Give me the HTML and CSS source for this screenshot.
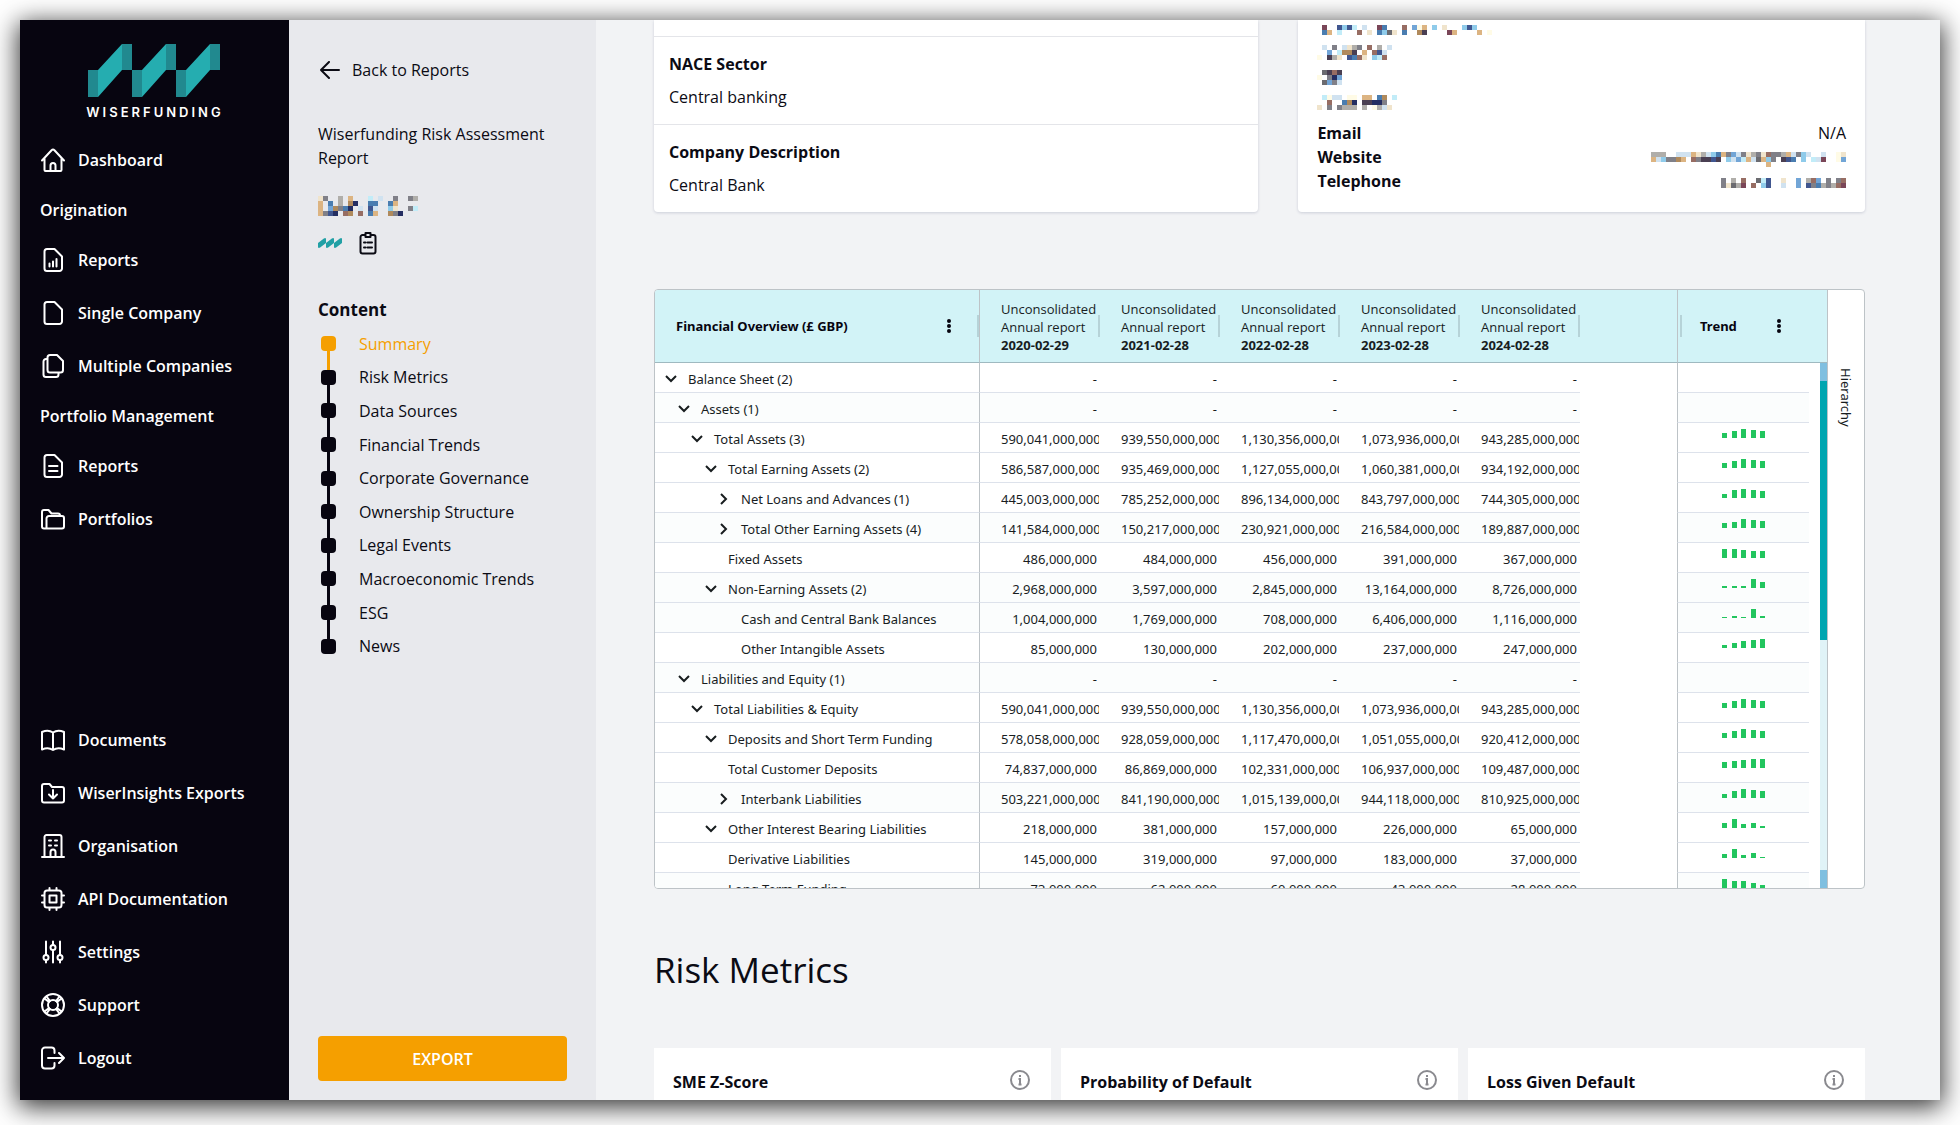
FILE: index.html
```
<!DOCTYPE html>
<html lang="en">
<head>
    <meta charset="UTF-8">
    <meta name="viewport" content="width=device-width, initial-scale=1.0">
    <title>Wiserfunding Risk Assessment Report</title>
    <link rel="stylesheet" href="styles.css">
</head>
<body>
    <div class="app">
        <!-- Main navigation -->
        <nav class="sidebar">
            <a class="logo" href="#">
                <svg viewBox="0 0 132 53" width="132" height="53" aria-hidden="true">
                    <g fill="#21898f">
                        <path d="M0 26h10v27H0zM34 0h10v26H34zM44 26h10v27H44zM78 0h10v26H78zM88 26h10v27H88zM122 0h10v26h-10z"/>
                    </g>
                    <g fill="#25adb0">
                        <path d="M10 26L34 0v26L10 53zM54 26L78 0v26L54 53zM98 26L122 0v26L98 53z"/>
                    </g>
                </svg>
                <span class="logo-text">WISERFUNDING</span>
            </a>

            <a class="nav-item" href="#">
                <svg class="icon" viewBox="0 0 24 24"><path d="M1 12.5L10.8 2a1.6 1.6 0 0 1 2.4 0L23 12.5M3.5 10.5V22a1 1 0 0 0 1 1h15a1 1 0 0 0 1-1V10.5M9.5 23v-5.5a2.5 2.5 0 0 1 5 0V23"/></svg>
                Dashboard
            </a>
            <h2 class="nav-title">Origination</h2>
            <a class="nav-item" href="#">
                <svg class="icon" viewBox="0 0 24 24"><path d="M6 1h7.5L21 8.5V20.5A2.5 2.5 0 0 1 18.5 23H6a2.5 2.5 0 0 1-2.5-2.5v-17A2.5 2.5 0 0 1 6 1zM8.5 15.5v3M12 13.5v5M15.5 11v7.5"/></svg>
                Reports
            </a>
            <a class="nav-item" href="#">
                <svg class="icon" viewBox="0 0 24 24"><path d="M6 1h7.5L21 8.5V20.5A2.5 2.5 0 0 1 18.5 23H6a2.5 2.5 0 0 1-2.5-2.5v-17A2.5 2.5 0 0 1 6 1z"/></svg>
                Single Company
            </a>
            <a class="nav-item" href="#">
                <svg class="icon" viewBox="0 0 24 24"><path d="M9 1h7l6 6v9a2.5 2.5 0 0 1-2.5 2.5H9A2.5 2.5 0 0 1 6.5 16V3.5A2.5 2.5 0 0 1 9 1zM6.5 5H5a2.5 2.5 0 0 0-2.5 2.5v13A2.5 2.5 0 0 0 5 23h10a2.5 2.5 0 0 0 2.5-2.5v-2"/></svg>
                Multiple Companies
            </a>
            <h2 class="nav-title">Portfolio Management</h2>
            <a class="nav-item" href="#">
                <svg class="icon" viewBox="0 0 24 24"><path d="M6 1h7.5L21 8.5V20.5A2.5 2.5 0 0 1 18.5 23H6a2.5 2.5 0 0 1-2.5-2.5v-17A2.5 2.5 0 0 1 6 1zM8 12h8.5M8 17h8.5"/></svg>
                Reports
            </a>
            <a class="nav-item" href="#">
                <svg class="icon" viewBox="0 0 24 24"><path d="M5.5 21.5H3a2 2 0 0 1-2-2V5a2 2 0 0 1 2-2h4.5l3 3.5H17a2 2 0 0 1 2 2V9M5.5 21.5v-10A2.5 2.5 0 0 1 8 9h13a2 2 0 0 1 2 2v8.5a2 2 0 0 1-2 2z"/></svg>
                Portfolios
            </a>

            <div class="nav-bottom">
                <a class="nav-item" href="#">
                    <svg class="icon" viewBox="0 0 24 24"><path d="M12 4.500C9 2.500 4.500 2.500 1 4v17.500c3.500-1.500 8-1.500 11 .500 3-2 7.500-2 11-.500V4c-3.500-1.500-8-1.500-11 .500zM12 4.500V22"/></svg>
                    Documents
                </a>
                <a class="nav-item" href="#">
                    <svg class="icon" viewBox="0 0 24 24"><path d="M3 3h5.5L11 6h10a2 2 0 0 1 2 2v11.5a2 2 0 0 1-2 2H3a2 2 0 0 1-2-2V5a2 2 0 0 1 2-2zM12 9v8.5M8 13.5l4 4 4-4"/></svg>
                    WiserInsights Exports
                </a>
                <a class="nav-item" href="#">
                    <svg class="icon" viewBox="0 0 24 24"><path d="M1 23h22M3.5 23V3a2 2 0 0 1 2-2h13a2 2 0 0 1 2 2v20M9.5 23v-5a2.5 2.5 0 0 1 5 0v5M8 6.5h2M14 6.5h2M8 11.5h2M14 11.5h2"/></svg>
                    Organisation
                </a>
                <a class="nav-item" href="#">
                    <svg class="icon" viewBox="0 0 24 24"><path d="M6 3.5h12A2.5 2.5 0 0 1 20.5 6v12a2.5 2.5 0 0 1-2.5 2.5H6A2.5 2.5 0 0 1 3.5 18V6A2.5 2.5 0 0 1 6 3.5zM8.5 8.5h7v7h-7zM8.500 1v2.5M15.5 1v2.5M8.5 20.5V23M15.5 20.5V23M1 8.5h2.5M1 15.5h2.5M20.5 8.5H23M20.5 15.5H23"/></svg>
                    API Documentation
                </a>
                <a class="nav-item" href="#">
                    <svg class="icon" viewBox="0 0 24 24"><path d="M5 1.5V15M5 20v2.5M12 1.5V5M12 10v12.5M19 1.5V15M19 20v2.5"/><circle cx="5" cy="17.5" r="2.5"/><circle cx="12" cy="7.5" r="2.5"/><circle cx="19" cy="17.5" r="2.5"/></svg>
                    Settings
                </a>
                <a class="nav-item" href="#">
                    <svg class="icon" viewBox="0 0 24 24"><circle cx="12" cy="12" r="11"/><circle cx="12" cy="12" r="5"/><path d="M3.5 5.5l4.5 3.5M5.5 3.5L9 8M20.5 5.5L16 9M18.5 3.5L15 8M3.5 18.5L8 15M5.5 20.5L9 16M20.5 18.5L16 15M18.5 20.5L15 16"/></svg>
                    Support
                </a>
                <a class="nav-item" href="#">
                    <svg class="icon" viewBox="0 0 24 24"><path d="M13.5 7V4.5A3 3 0 0 0 10.5 1.5H4A3 3 0 0 0 1 4.5v15a3 3 0 0 0 3 3h6.5a3 3 0 0 0 3-3V17M7 12h16M18 7l5 5-5 5"/></svg>
                    Logout
                </a>
            </div>
        </nav>

        <!-- Report panel -->
        <aside class="panel">
            <a class="back" href="#">
                <svg class="back-icon" viewBox="0 0 20 18" width="20" height="18" aria-hidden="true"><path d="M19 9H1M9 1L1 9l8 8"/></svg>
                Back to Reports
            </a>
            <p class="panel-title">Wiserfunding Risk Assessment Report</p>
            <svg class="redacted" data-rows="yG..u.t...c.p..G..Gu|t.b.u.on..bb..bt|t.soGbn.p.Bp..ly..Gc|tGBn.wo.w.bt..oGn"></svg>
            <div class="panel-icons">
                <svg viewBox="0 0 132 53" width="24" height="10" aria-hidden="true">
                    <path fill="#21a0a5" d="M0 26L34 0h10v26L10 53H0zM44 26L78 0h10v26L54 53H44zM88 26L122 0h10v26L98 53H88z"/>
                </svg>
                <svg class="clipboard" viewBox="0 0 18 24" width="18" height="24" aria-hidden="true"><path d="M5.5 4H3.5A2 2 0 0 0 1.5 6v14.5a2 2 0 0 0 2 2h11a2 2 0 0 0 2-2V6a2 2 0 0 0-2-2h-2M6.5 2h5v4h-5zM5 11.5h1.5M8.5 11.5H13M5 16.5h1.5M8.5 16.5H13"/></svg>
            </div>
            <h2 class="toc-title">Content</h2>
            <ul class="toc">
                <li class="active"><a href="#">Summary</a></li>
                <li><a href="#">Risk Metrics</a></li>
                <li><a href="#">Data Sources</a></li>
                <li><a href="#">Financial Trends</a></li>
                <li><a href="#">Corporate Governance</a></li>
                <li><a href="#">Ownership Structure</a></li>
                <li><a href="#">Legal Events</a></li>
                <li><a href="#">Macroeconomic Trends</a></li>
                <li><a href="#">ESG</a></li>
                <li><a href="#">News</a></li>
            </ul>
            <button class="export" type="button">EXPORT</button>
        </aside>

        <main class="content">
            <div class="company">
                <section class="card details">
                    <div class="detail detail-end"></div>
                    <div class="detail">
                        <h3>NACE Sector</h3>
                        <p>Central banking</p>
                    </div>
                    <div class="detail">
                        <h3>Company Description</h3>
                        <p>Central Bank</p>
                    </div>
                </section>
                <section class="card contact">
                    <div class="address">
                        <svg class="redacted" data-rows=".m..BlBc.p..mb...w.sft.l.y...lBl|.bt.c...w.y.blgy.b..ok....mt....t.f"></svg>
                        <svg class="redacted" data-rows=".p.G.pyuG.w.u.p|..s.cook.t.wBp|f.kuy.Bbwy.lcw"></svg>
                        <svg class="redacted" data-rows=".gkwk|f.Gns|.gsGp"></svg>
                        <svg class="redacted" data-rows=".cfpp.ff.tt.bo.c|..w..bon.kknnG|y.G.Guuu.u.fupy"></svg>
                    </div>
                    <dl class="contact-list">
                        <div><dt>Email</dt><dd>N/A</dd></div>
                        <div><dt>Website</dt><dd><svg class="redacted" data-rows="uuu..ppptyuplbtGspGyuGywGGutpGlp..p..fy|tplGGot.wGkkBk.lpsctpgtlG.kBb.l.cpm..fs|.......................t"></svg></dd></div>
                        <div><dt>Telephone</dt><dd><svg class="redacted" data-rows="G.u.w..gcB..y..s.uws.G.Gw|Gygum.w.lB..p..s.BGbuGuwm"></svg></dd></div>
                    </dl>
                </section>
            </div>

            <!-- Financial overview grid -->
            <section class="grid">
                <div class="grid-main">
                    <table class="grid-table">
                        <colgroup>
                            <col class="col-name">
                            <col class="col-year"><col class="col-year"><col class="col-year"><col class="col-year"><col class="col-year">
                            <col>
                            <col class="col-trend">
                            <col class="col-gutter">
                        </colgroup>
                        <thead>
                            <tr>
                                <th class="name">
                                    <div class="head">
                                        Financial Overview (£ GBP)
                                        <button class="menu" type="button" aria-label="Column menu"><svg viewBox="0 0 4 14" width="4" height="14"><circle cx="2" cy="2" r="2"/><circle cx="2" cy="7" r="2"/><circle cx="2" cy="12" r="2"/></svg></button>
                                    </div>
                                </th>
                                <th class="year"><div class="head">Unconsolidated<br>Annual report<br><b>2020-02-29</b></div></th>
                                <th class="year"><div class="head">Unconsolidated<br>Annual report<br><b>2021-02-28</b></div></th>
                                <th class="year"><div class="head">Unconsolidated<br>Annual report<br><b>2022-02-28</b></div></th>
                                <th class="year"><div class="head">Unconsolidated<br>Annual report<br><b>2023-02-28</b></div></th>
                                <th class="year"><div class="head">Unconsolidated<br>Annual report<br><b>2024-02-28</b></div></th>
                                <td></td>
                                <th class="trend" colspan="2">
                                    <div class="head">
                                        Trend
                                        <button class="menu" type="button" aria-label="Column menu"><svg viewBox="0 0 4 14" width="4" height="14"><circle cx="2" cy="2" r="2"/><circle cx="2" cy="7" r="2"/><circle cx="2" cy="12" r="2"/></svg></button>
                                    </div>
                                </th>
                            </tr>
                        </thead>
                        <tbody id="gridRows"></tbody>
                    </table>
                    <div class="scrollbar">
                        <div class="track"><div class="thumb"></div></div>
                    </div>
                </div>
                <div class="grid-side"><button type="button">Hierarchy</button></div>
            </section>

            <h1>Risk Metrics</h1>
            <div class="metrics">
                <section class="metric">
                    <h3>SME Z-Score</h3>
                    <svg class="info" viewBox="0 0 20 20" aria-hidden="true"><circle cx="10" cy="10" r="9"/><path d="M10 5v2M8.5 9H10v5.5M8.5 14.5h3"/></svg>
                </section>
                <section class="metric">
                    <h3>Probability of Default</h3>
                    <svg class="info" viewBox="0 0 20 20" aria-hidden="true"><circle cx="10" cy="10" r="9"/><path d="M10 5v2M8.5 9H10v5.5M8.5 14.5h3"/></svg>
                </section>
                <section class="metric">
                    <h3>Loss Given Default</h3>
                    <svg class="info" viewBox="0 0 20 20" aria-hidden="true"><circle cx="10" cy="10" r="9"/><path d="M10 5v2M8.5 9H10v5.5M8.5 14.5h3"/></svg>
                </section>
            </div>
        </main>
    </div>

    <script>
        // level, state (open / closed / leaf), shaded, name, values in millions
        const rows = [
            [0, "open", false, "Balance Sheet (2)", null],
            [1, "open", true, "Assets (1)", null],
            [2, "open", false, "Total Assets (3)", [590041, 939550, 1130356, 1073936, 943285]],
            [3, "open", false, "Total Earning Assets (2)", [586587, 935469, 1127055, 1060381, 934192]],
            [4, "closed", false, "Net Loans and Advances (1)", [445003, 785252, 896134, 843797, 744305]],
            [4, "closed", true, "Total Other Earning Assets (4)", [141584, 150217, 230921, 216584, 189887]],
            [3, "leaf", false, "Fixed Assets", [486, 484, 456, 391, 367]],
            [3, "open", true, "Non-Earning Assets (2)", [2968, 3597, 2845, 13164, 8726]],
            [4, "leaf", true, "Cash and Central Bank Balances", [1004, 1769, 708, 6406, 1116]],
            [4, "leaf", false, "Other Intangible Assets", [85, 130, 202, 237, 247]],
            [1, "open", true, "Liabilities and Equity (1)", null],
            [2, "open", false, "Total Liabilities & Equity", [590041, 939550, 1130356, 1073936, 943285]],
            [3, "open", false, "Deposits and Short Term Funding", [578058, 928059, 1117470, 1051055, 920412]],
            [3, "leaf", false, "Total Customer Deposits", [74837, 86869, 102331, 106937, 109487]],
            [4, "closed", true, "Interbank Liabilities", [503221, 841190, 1015139, 944118, 810925]],
            [3, "open", false, "Other Interest Bearing Liabilities", [218, 381, 157, 226, 65]],
            [3, "leaf", false, "Derivative Liabilities", [145, 319, 97, 183, 37]],
            [3, "leaf", true, "Long Term Funding", [73, 62, 60, 43, 28]]
        ];

        const chevrons = {
            open: '<button class="toggle" type="button" aria-label="Collapse"><svg viewBox="0 0 12 12"><path d="M1 3l5 5 5-5"/></svg></button>',
            closed: '<button class="toggle" type="button" aria-label="Expand"><svg viewBox="0 0 12 12"><path d="M3 1l5 5-5 5"/></svg></button>',
            leaf: '<span class="toggle"></span>'
        };

        document.getElementById("gridRows").innerHTML = rows.map(function([level, state, shaded, name, values]) {
            const cells = values
                ? values.map(v => `<td class="num"><span>${(v * 1000000).toLocaleString("en-GB")}</span></td>`).join("")
                : '<td class="num"><span>-</span></td>'.repeat(5);
            let bars = "";
            if (values) {
                const max = Math.max(...values);
                bars = '<div class="bars">' + values.map(v => `<i style="height:${Math.round(v / max * 8.8)}px"></i>`).join("") + "</div>";
            }
            return `<tr class="${shaded ? "shaded" : ""}">
                <td class="name"><div class="tree level-${level}">${chevrons[state]}${name.replace("&", "&amp;")}</div></td>
                ${cells}<td class="blank"></td><td class="spark">${bars}</td><td class="blank"></td></tr>`;
        }).join("");

        // Hidden company data is drawn as coloured blocks
        const palette = {
            m: "#7a4658", b: "#4a7db0", B: "#40568f", l: "#8fcbea", c: "#c2ecf8", s: "#72a5d6",
            t: "#dcb482", w: "#976d63", g: "#6b6b70", G: "#808088", y: "#f0e4cc", k: "#4a3f52",
            p: "#d0e2f0", n: "#242e62", o: "#b08a5c", u: "#b0aeaa", f: "#fffbe6"
        };
        const block = 5;

        document.querySelectorAll(".redacted").forEach(function(svg) {
            const lines = svg.dataset.rows.split("|");
            const width = Math.max(...lines.map(l => l.length)) * block;
            svg.setAttribute("width", width);
            svg.setAttribute("height", lines.length * block);
            svg.innerHTML = lines.map((line, y) => [...line].map((c, x) =>
                c === "." ? "" : `<rect x="${x * block}" y="${y * block}" width="${block}" height="${block}" fill="${palette[c]}"/>`
            ).join("")).join("");
        });
    </script>
</body>
</html>
```
FILE: styles.css
```
* {
    box-sizing: border-box;
}

body {
    margin: 0;
    padding: 20px 20px 25px;
    height: 100vh;
    overflow: hidden;
    background: #ffffff;
    font-family: "Open Sans", "Noto Sans", sans-serif;
    font-size: 16px;
    line-height: 24px;
    color: #0b0b14;
}

h1, h2, h3, p, ul, dl, dd {
    margin: 0;
    padding: 0;
}

a {
    color: inherit;
    text-decoration: none;
}

button {
    font: inherit;
    color: inherit;
    padding: 0;
    border: none;
    background: none;
    cursor: pointer;
}

svg {
    display: block;
    flex: none;
}

.app {
    display: flex;
    height: 100%;
    background: #f2f3f5;
    box-shadow: 0 5px 24px 2px rgba(0, 0, 0, 0.8);
}

/* Sidebar */

.sidebar {
    display: flex;
    flex-direction: column;
    flex: none;
    width: 269px;
    padding: 24px 20px 16px;
    background: #070510;
    color: #ffffff;
    font-weight: 600;
}

.logo {
    display: flex;
    flex-direction: column;
    align-items: center;
    gap: 3px;
    width: 227px;
    height: 89px;
}

.logo-text {
    font-family: Inter, sans-serif;
    font-size: 13px;
    letter-spacing: 3px;
    padding-left: 3px;
}

.nav-item {
    display: flex;
    align-items: center;
    gap: 13px;
    height: 53px;
    padding-left: 1px;
}

.nav-title {
    display: flex;
    align-items: center;
    height: 47px;
    font-size: 16px;
    font-weight: 600;
}

.nav-bottom {
    margin-top: auto;
}

.icon {
    width: 24px;
    height: 24px;
    fill: none;
    stroke: #ffffff;
    stroke-width: 2;
    stroke-linecap: round;
    stroke-linejoin: round;
}

/* Report panel */

.panel {
    display: flex;
    flex-direction: column;
    flex: none;
    width: 307px;
    padding: 38px 29px 19px 29px;
    background: #e8e9ed;
}

.back {
    display: flex;
    align-items: center;
    gap: 12px;
    padding-left: 2px;
    margin-bottom: 40px;
}

.back-icon, .clipboard {
    fill: none;
    stroke: #0b0b14;
    stroke-width: 2;
    stroke-linecap: round;
    stroke-linejoin: round;
}

.panel-title {
    margin-bottom: 26px;
}

.panel-icons {
    display: flex;
    align-items: center;
    gap: 17px;
    margin: 15px 0 33px;
}

.toc-title {
    font-size: 17px;
    line-height: 44px;
    font-weight: 700;
    margin-bottom: -5px;
}

.toc {
    display: flex;
    flex-direction: column;
    height: 336px;
    padding-left: 3px;
    list-style: none;
}

.toc li {
    display: flex;
    flex: 1;
    align-items: center;
    gap: 23px;
    position: relative;
}

.toc li::before {
    content: "";
    width: 15px;
    height: 15px;
    border-radius: 4px;
    background: #070510;
    z-index: 1;
}

/* line down to the next item */
.toc li:not(:last-child)::after {
    content: "";
    position: absolute;
    left: 6px;
    top: 24px;
    width: 3px;
    height: 20px;
    background: #070510;
}

.toc .active {
    color: #f59f00;
}

.toc .active::before, .toc li.active::after {
    background: #f59f00;
}

.export {
    height: 45px;
    margin-top: auto;
    border-radius: 4px;
    background: #f59f00;
    color: #ffffff;
    font-weight: 600;
}

/* Content */

.content {
    display: flex;
    flex-direction: column;
    flex: 1;
    min-width: 0;
    overflow: hidden;
    padding: 0 75px 0 58px;
}

.content > * {
    flex-shrink: 0;
}

.company {
    display: grid;
    grid-template-columns: 16fr 15fr;
    gap: 40px;
    margin-bottom: 77px;
}

.card {
    background: #ffffff;
    border-radius: 0 0 4px 4px;
    box-shadow: 0 1px 3px rgba(60, 70, 110, 0.2);
}

.detail {
    height: 88px;
    padding: 15px 15px 0;
    border-top: 1px solid #e4e5e9;
}

.detail-end {
    height: 16px;
    border-top: none;
}

.detail h3 {
    font-size: 16px;
    font-weight: 700;
    margin-bottom: 9px;
}

.contact {
    padding: 5px 19px 0;
}

.address {
    display: flex;
    flex-direction: column;
    gap: 10px;
    height: 96px;
}

.contact-list div {
    display: flex;
    justify-content: space-between;
    align-items: center;
    height: 24px;
}

.contact-list dt {
    font-weight: 700;
}

.contact-list .redacted {
    margin-top: 4px;
}

/* Financial overview */

.grid {
    display: flex;
    height: 600px;
    overflow: hidden;
    border: 1px solid #bdc3c7;
    border-radius: 4px;
    background: #ffffff;
    font-family: "Noto Sans", "Open Sans", sans-serif;
    font-size: 13px;
    line-height: 18px;
    color: #181d1f;
}

.grid-main {
    position: relative;
    flex: 1;
    min-width: 0;
}

.grid-table {
    width: 100%;
    table-layout: fixed;
    border-collapse: separate;
    border-spacing: 0;
}

.col-name {
    width: 325px;
}

.col-year {
    width: 120px;
}

.col-trend {
    width: 132px;
}

.col-gutter {
    width: 18px;
}

.grid-table th, .grid-table td {
    padding: 0;
}

.grid-table thead th, .grid-table thead td {
    height: 73px;
    background: #d2f3f7;
    border-bottom: 1px solid #9fb9c0;
    text-align: left;
}

.grid-table thead .year {
    font-family: "Open Sans", "Noto Sans", sans-serif;
    font-weight: 400;
}

.year .head {
    padding-top: 2px;
}

.grid-table .name {
    border-right: 1px solid #bdc3c7;
}

.grid-table .trend, .grid-table .spark {
    border-left: 1px solid #bdc3c7;
}

.head {
    position: relative;
    padding-left: 21px;
}

.name .head, .trend .head {
    display: flex;
    align-items: center;
    justify-content: space-between;
    padding-right: 28px;
    font-weight: 700;
    color: #070510;
}

.trend .head {
    padding-left: 22px;
    padding-right: 46px;
}

/* column resize handle */
.head::after {
    content: "";
    position: absolute;
    right: 0;
    top: 50%;
    width: 2px;
    height: 22px;
    margin-top: -11px;
    background: #b6d3d8;
}

.trend .head::after {
    right: auto;
    left: 2px;
}

.menu svg {
    fill: #070510;
}

.grid-table tbody td {
    height: 30px;
    border-bottom: 1px solid #dde2eb;
}

.grid-table .shaded td {
    background: #fbfdfd;
}

.grid-table tbody .blank {
    border-bottom: none;
    background: #ffffff;
}

.tree {
    display: flex;
    align-items: center;
    gap: 11px;
    padding-top: 2px;
    white-space: nowrap;
}

.level-0 { padding-left: 10px; }
.level-1 { padding-left: 23px; }
.level-2 { padding-left: 36px; }
.level-3 { padding-left: 50px; }
.level-4 { padding-left: 63px; }

.toggle {
    width: 12px;
    height: 12px;
}

.toggle svg {
    width: 12px;
    height: 12px;
    fill: none;
    stroke: #181d1f;
    stroke-width: 2;
}

/* long amounts run past the column and are clipped */
.num span {
    display: block;
    width: fit-content;
    min-width: 96px;
    max-width: 98px;
    margin-left: 21px;
    padding-top: 2px;
    overflow: hidden;
    text-align: right;
}

.bars {
    display: flex;
    align-items: flex-end;
    justify-content: space-between;
    width: 43px;
    height: 15px;
    margin: 0 auto 14px;
}

.bars i {
    width: 5px;
    background: #22c55e;
}

.scrollbar {
    position: absolute;
    top: 73px;
    right: 0;
    bottom: 0;
    width: 7px;
    padding: 18px 0;
    background: #7fbfe0;
}

.track {
    height: 100%;
    background: #e0f3f7;
}

.thumb {
    height: 53%;
    background: #00a5b0;
}

.grid-side {
    flex: none;
    width: 37px;
    padding-top: 74px;
    border-left: 1px solid #bdc3c7;
}

.grid-side button {
    display: block;
    width: 100%;
    padding-top: 4px;
    writing-mode: vertical-rl;
}

/* Risk metrics */

h1 {
    margin: 57px 0 54px;
    font-size: 35px;
    line-height: 48px;
    font-weight: 400;
}

.metrics {
    display: grid;
    grid-template-columns: repeat(3, 1fr);
    gap: 10px;
}

.metric {
    display: flex;
    justify-content: space-between;
    height: 160px;
    padding: 22px 21px 0 19px;
    background: #ffffff;
}

.metric h3 {
    font-size: 16px;
    font-weight: 700;
    line-height: 24px;
}

.info {
    width: 20px;
    height: 20px;
    fill: none;
    stroke: #8a8a8f;
    stroke-width: 2;
}
```
